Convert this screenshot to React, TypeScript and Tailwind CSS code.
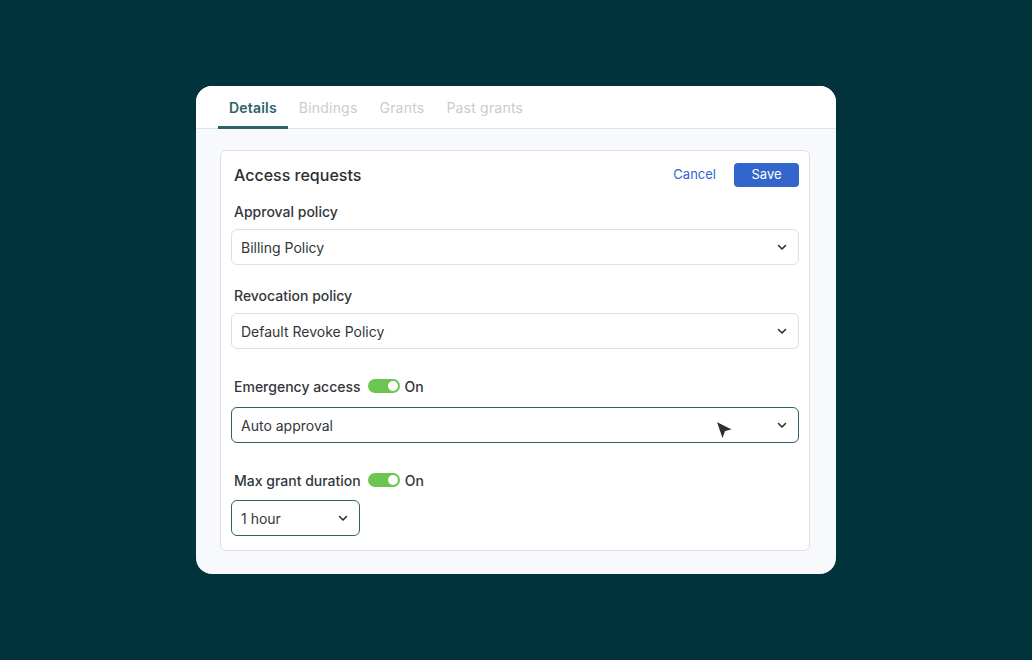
import React from 'react';

const tabs = ['Details', 'Bindings', 'Grants', 'Past grants'];

function Chevron() {
  return (
    <svg width="12" height="12" viewBox="0 0 12 12" fill="none" className="shrink-0">
      <path d="M2.5 4.5L6 8L9.5 4.5" stroke="#2b2f33" strokeWidth="1.6" strokeLinecap="round" strokeLinejoin="round" />
    </svg>
  );
}

function Select({ value, active = false, className = '' }: { value: string; active?: boolean; className?: string }) {
  return (
    <div
      className={`flex h-[36px] items-center justify-between rounded-[6px] bg-white pl-[9px] pr-[10px] text-[14px] text-[#33373b] ${
        active ? 'border-[1.5px] border-[#2c6368]' : 'border border-[#dcdfe3]'
      } ${className}`}
    >
      <span>{value}</span>
      <Chevron />
    </div>
  );
}

function Toggle() {
  return (
    <span className="flex h-[14px] w-[32px] items-center justify-end rounded-full bg-[#6cc551] pr-[2px]">
      <span className="h-[10px] w-[10px] rounded-full bg-white" />
    </span>
  );
}

function Label({ text, toggle = false, className = '' }: { text: string; toggle?: boolean; className?: string }) {
  return (
    <div className={`flex h-[20px] items-center gap-[7px] pl-[3px] text-[14px] font-medium text-[#33373b] ${className}`}>
      <span>{text}</span>
      {toggle && (
        <>
          <Toggle />
          <span className="-ml-[2px]">On</span>
        </>
      )}
    </div>
  );
}

export default function App() {
  return (
    <div
      className="flex h-screen w-full items-center justify-center bg-[#00333b]"
      style={{ fontFamily: 'Inter, "Noto Sans", sans-serif' }}
    >
      <div className="flex h-[488px] w-[640px] flex-col overflow-hidden rounded-[16px] bg-[#f7f9fd]">
        {/* Tabs */}
        <div className="flex h-[43px] shrink-0 items-end border-b border-[#dfe2e6] bg-white pl-[22px]">
          {tabs.map((t, i) => (
            <div
              key={t}
              className={`-mb-px flex h-[43px] items-center text-[14px] ${
                i === 0
                  ? 'border-b-[3px] border-[#2c6368] px-[11px] pt-[3px] font-semibold tracking-[0.2px] text-[#2c6368]'
                  : 'px-[11px] tracking-[0.2px] text-[#c9ccd0]'
              }`}
            >
              {t}
            </div>
          ))}
        </div>

        {/* Body */}
        <div className="flex-1 pt-[21px] pl-[24px] pr-[26px]">
          <div className="relative rounded-[6px] border border-[#dcdfe3] bg-white px-[10px] pt-[12px] pb-[14px]">
            <div className="flex h-[24px] items-center justify-between pl-[3px]">
              <span className="text-[16px] font-medium text-[#2b2f33]">Access requests</span>
              <div className="flex items-center gap-[18px]">
                <span className="text-[13px] text-[#3366cc]">Cancel</span>
                <button className="h-[24px] w-[65px] rounded-[4px] bg-[#3366cc] text-[13px] text-white">Save</button>
              </div>
            </div>

            <Label text="Approval policy" className="mt-[14px]" />
            <Select value="Billing Policy" className="mt-[8px]" />

            <Label text="Revocation policy" className="mt-[20px]" />
            <Select value="Default Revoke Policy" className="mt-[8px]" />

            <Label text="Emergency access" toggle className="mt-[27px]" />
            <Select value="Auto approval" active className="mt-[11px]" />

            <Label text="Max grant duration" toggle className="mt-[27px]" />
            <Select value="1 hour" active className="mt-[10px] w-[129px]" />

            {/* pointer over the emergency select */}
            <svg width="22" height="24" viewBox="0 0 22 24" className="absolute left-[493px] top-[268px]">
              <path d="M2 2L19 10.5L11.5 12.5L8.5 21Z" fill="#2b2f33" stroke="#ffffff" strokeWidth="1.2" strokeLinejoin="round" />
            </svg>
          </div>
        </div>
      </div>
    </div>
  );
}
